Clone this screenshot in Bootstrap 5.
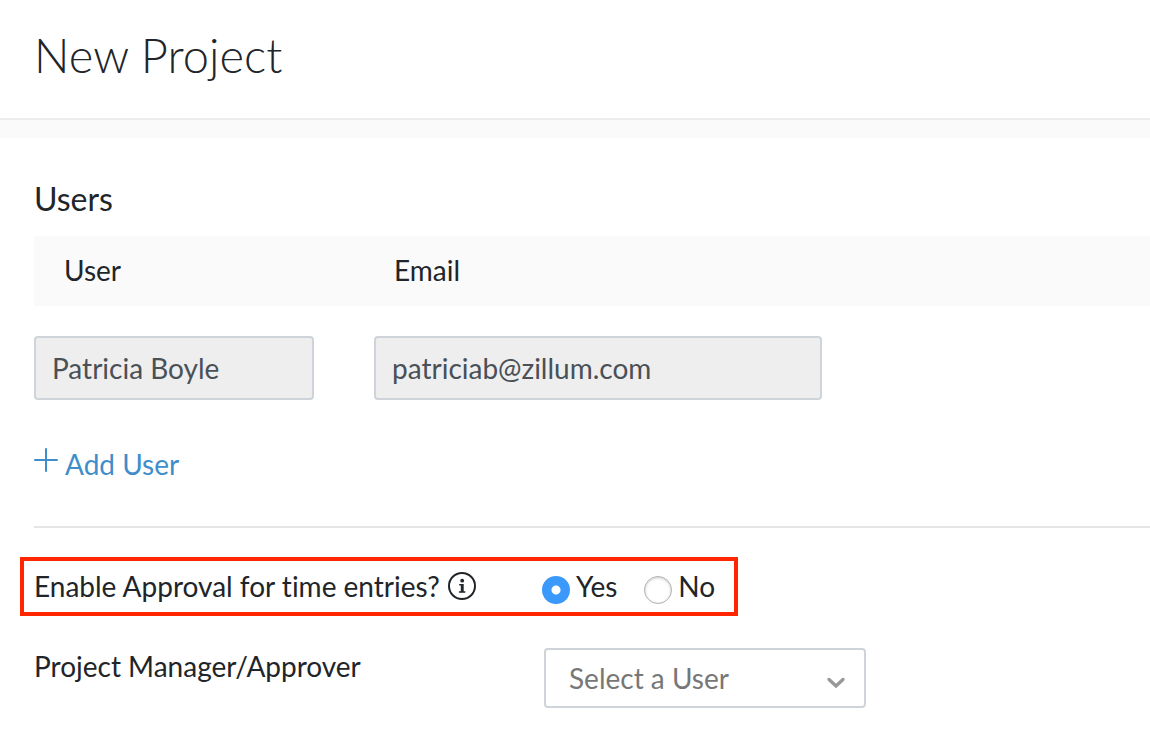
<!DOCTYPE html>
<html lang="en">
<head>
<meta charset="utf-8">
<meta name="viewport" content="width=device-width, initial-scale=1">
<title>New Project</title>
<link href="https://cdn.jsdelivr.net/npm/bootstrap@5.3.0/dist/css/bootstrap.min.css" rel="stylesheet">
<style>
  body { font-family: Lato, "Liberation Sans", sans-serif; font-size: 28px; line-height: 32px; font-variant-ligatures: none; color: #212529; background: #fff; }
  .page-head { border-bottom: 2px solid #ededed; padding: 27px 34px 35px; }
  .page-head h1 { font-size: 47px; line-height: 56px; font-weight: 300; }
  .band { height: 18px; background: #fafafa; }
  .section { padding-left: 34px; }
  .section h2 { font-size: 32px; line-height: 36px; font-weight: 400; margin: 43px 0 19px; }
  .user-table { table-layout: fixed; width: 100%; }
  .user-table th { background: #fafafa; font-weight: 400; height: 70px; padding: 0 20px 2px; }
  .user-table th:first-child { width: 340px; padding-left: 30px; }
  .user-table td { padding: 30px 0 0; }
  .user-table .form-control { height: 64px; border: 2px solid #ced4da; border-radius: 4px; padding: 0 16px; background: #eee; color: #495057; font-size: 28px; }
  .name-box { width: 280px; }
  .mail-box { width: 448px; }
  .add-link { color: #408dcb; gap: 7px; margin-top: 48px; }
  .add-link svg { margin-bottom: 8px; }
  .rule { border-top: 2px solid #e5e5e5; margin: 46px 0 29px; }
  .approval { width: fit-content; margin-left: 20px; border: 4px solid #ff2600; padding: 9px 19px 8px 10px; }
  .approval-label { width: 508px; height: 32px; gap: 8px; }
  .choices { gap: 27px; }
  .form-radio { appearance: none; width: 28px; height: 28px; margin: 6px 6px 0 0; border-radius: 50%; border: 1px solid #b0b0b0; background: #fff; box-shadow: inset 0 1px 3px rgba(0,0,0,.2); }
  .form-radio:checked { border: 0; box-shadow: none; background: radial-gradient(circle, #fff 0 4px, #3b99fc 5px); }
  .manager { padding: 32px 34px; }
  .manager label { width: 510px; padding-top: 2px; }
  .manager .form-select { width: 322px; height: 60px; border: 2px solid #ced4da; border-radius: 4px; padding: 0 48px 0 23px; font-size: 28px; color: #777; background-image: url("data:image/svg+xml,%3Csvg xmlns='http://www.w3.org/2000/svg' viewBox='0 0 20 12'%3E%3Cpath d='M3 2.5 10 9 17 2.5' fill='none' stroke='%23999' stroke-width='3.4' stroke-linecap='round'/%3E%3C/svg%3E"); background-size: 20px 12px; background-position: right 18px top 27px; }
</style>
<script src="https://cdn.jsdelivr.net/npm/bootstrap@5.3.0/dist/js/bootstrap.bundle.min.js"></script>
</head>
<body>
<header class="page-head"><h1 class="m-0">New Project</h1></header>
<div class="band"></div>
<main>
  <section class="section">
    <h2>Users</h2>
    <table class="user-table">
      <thead><tr><th scope="col" id="col-user">User</th><th scope="col" id="col-email">Email</th></tr></thead>
      <tbody><tr>
        <td><input class="form-control name-box" type="text" value="Patricia Boyle" aria-labelledby="col-user" disabled></td>
        <td><input class="form-control mail-box" type="email" value="patriciab@zillum.com" aria-labelledby="col-email" disabled></td>
      </tr></tbody>
    </table>
    <a href="#" class="add-link d-inline-flex align-items-center text-decoration-none">
      <svg width="24" height="24" viewBox="0 0 24 24" fill="none" stroke="currentColor" stroke-width="2" stroke-linecap="round" aria-hidden="true"><path d="M12 1v22M1 12h22"/></svg>
      <span>Add User</span>
    </a>
    <div class="rule"></div>
  </section>
  <div class="approval d-flex" role="radiogroup" aria-labelledby="approval-label">
    <div class="approval-label d-flex align-items-center">
      <span id="approval-label">Enable Approval for time entries?</span>
      <svg width="28" height="28" viewBox="0 0 28 28" aria-hidden="true"><circle cx="14" cy="14" r="13" fill="none" stroke="#212529" stroke-width="2"/><circle cx="14.2" cy="8.7" r="1.9" fill="#212529"/><path d="M11.2 12h4.5v7.2h1.6v1.6h-6.4v-1.6h1.9v-5.6h-1.6z" fill="#212529"/></svg>
    </div>
    <div class="choices d-flex">
      <div class="d-flex align-items-start">
        <input class="form-radio" type="radio" name="approval" id="approval-yes" checked>
        <label for="approval-yes">Yes</label>
      </div>
      <div class="d-flex align-items-start">
        <input class="form-radio" type="radio" name="approval" id="approval-no">
        <label for="approval-no">No</label>
      </div>
    </div>
  </div>
  <div class="manager d-flex align-items-start">
    <label for="manager">Project Manager/Approver</label>
    <select class="form-select" id="manager"><option>Select a User</option></select>
  </div>
</main>
</body>
</html>
